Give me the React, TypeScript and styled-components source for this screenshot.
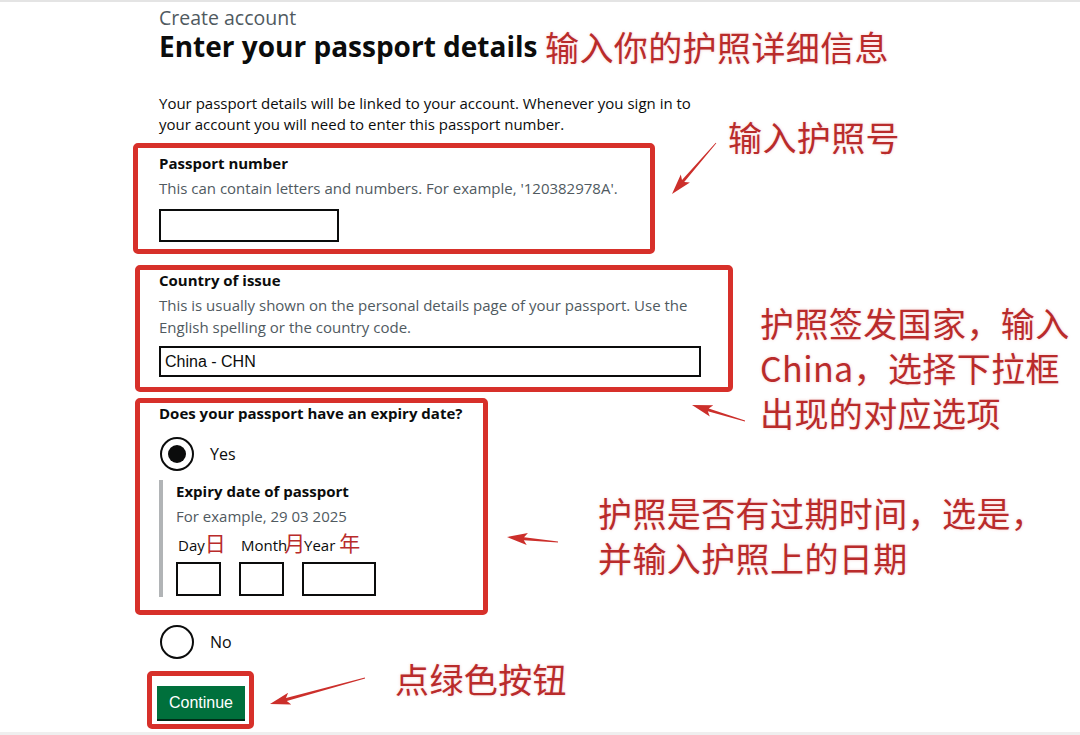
import styled, { createGlobalStyle } from "styled-components";

const GlobalStyle = createGlobalStyle`
  html, body {
    margin: 0;
    padding: 0;
    background: #ffffff;
  }
  body {
    font-family: "Open Sans", "Noto Sans", sans-serif;
    color: #0b0c0c;
    overflow: hidden;
  }
`;

const Page = styled.div`
  position: relative;
  width: 1080px;
  height: 735px;
  box-sizing: border-box;
  border-top: 2px solid #e4e4e4;
  border-bottom: 3px solid #efefef;
  overflow: hidden;
`;

const Column = styled.main`
  display: flex;
  flex-direction: column;
  align-items: flex-start;
  padding: 6px 0 0 159px;
`;

const Caption = styled.span`
  font-size: 19.5px;
  line-height: 20px;
  color: #505a5f;
`;

const Heading = styled.h1`
  margin: 3px 0 0;
  font-size: 28px;
  line-height: 30px;
  font-weight: 700;
`;

const Lead = styled.p`
  margin: 32px 0 0;
  font-size: 15px;
  line-height: 21px;
  white-space: nowrap;
`;

const Section = styled.section<{
  $inset: number;
  $width: number;
  $top: number;
  $pt?: number;
  $pb: number;
  $pl: number;
}>`
  box-sizing: border-box;
  display: flex;
  flex-direction: column;
  align-items: flex-start;
  width: ${(p) => p.$width}px;
  margin: ${(p) => p.$top}px 0 0 -${(p) => p.$inset}px;
  padding: ${(p) => p.$pt ?? 0}px 0 ${(p) => p.$pb}px ${(p) => p.$pl}px;
  border: 5px solid #d7302a;
  border-radius: 5px;
`;

const Label = styled.label<{ $gap?: number }>`
  display: block;
  margin-top: ${(p) => p.$gap ?? 0}px;
  font-size: 15px;
  line-height: 20px;
  font-weight: 700;
`;

const Hint = styled.div<{ $gap: number; $lh?: number }>`
  margin-top: ${(p) => p.$gap}px;
  font-size: 15px;
  line-height: ${(p) => p.$lh ?? 20}px;
  color: #505a5f;
  white-space: nowrap;
`;

const TextInput = styled.input<{ $w: number; $h: number; $gap: number }>`
  box-sizing: border-box;
  width: ${(p) => p.$w}px;
  height: ${(p) => p.$h}px;
  margin-top: ${(p) => p.$gap}px;
  padding: 0 4px;
  border: 2px solid #0b0c0c;
  border-radius: 0;
  font-family: "Liberation Sans", Arial, sans-serif;
  font-size: 16px;
  color: #0b0c0c;
  background: #fff;
  outline: none;
`;

const RadioRow = styled.div<{ $gap: number }>`
  display: flex;
  align-items: center;
  gap: 16px;
  margin-top: ${(p) => p.$gap}px;
  margin-left: 1px;
  font-size: 16px;
  line-height: 22px;
`;

const RadioCircle = styled.span<{ $checked?: boolean }>`
  box-sizing: border-box;
  display: flex;
  align-items: center;
  justify-content: center;
  width: 34px;
  height: 34px;
  border: 2px solid #0b0c0c;
  border-radius: 50%;

  &::after {
    content: "";
    display: ${(p) => (p.$checked ? "block" : "none")};
    width: 18px;
    height: 18px;
    border-radius: 50%;
    background: #0b0c0c;
  }
`;

const Conditional = styled.div`
  display: flex;
  flex-direction: column;
  margin-top: 9px;
  padding: 1px 0 1px 13px;
  border-left: 4px solid #b1b4b6;
`;

const DateRow = styled.div`
  display: flex;
  gap: 18px;
  margin-top: 7px;
`;

const DateItem = styled.div<{ $w: number }>`
  display: flex;
  flex-direction: column;
  gap: 5px;
  flex: none;
  width: ${(p) => p.$w}px;
`;

const DateLabel = styled.span`
  padding-left: 2px;
  font-size: 15px;
  line-height: 24px;
  white-space: nowrap;
`;

const Mark = styled.span<{ $pull?: number }>`
  margin-left: -${(p) => p.$pull ?? 0}px;
  font-family: "Noto Sans CJK SC", sans-serif;
  font-size: 21px;
  line-height: 0;
  color: #b92b2b;
`;

const DateInput = styled.input`
  box-sizing: border-box;
  width: 100%;
  height: 34px;
  border: 2px solid #0b0c0c;
  border-radius: 0;
  background: #fff;
  outline: none;
`;

const Button = styled.button`
  width: 88px;
  height: 33px;
  padding: 0;
  border: none;
  border-radius: 0;
  background: #00703c;
  box-shadow: 0 2px 0 #002d18;
  color: #ffffff;
  font-family: "Liberation Sans", Arial, sans-serif;
  font-size: 16px;
  cursor: pointer;
`;

const Callout = styled.div<{ $x: number; $y: number }>`
  position: absolute;
  left: ${(p) => p.$x}px;
  top: ${(p) => p.$y}px;
  font-family: "Noto Sans CJK SC", sans-serif;
  font-size: 34px;
  line-height: 45px;
  letter-spacing: 0.4px;
  color: #b92b2b;
  white-space: nowrap;
  text-shadow: 0 0 3px rgba(220, 60, 60, 0.25);
`;

const Overlay = styled.svg`
  position: absolute;
  inset: 0;
  pointer-events: none;
`;

type Pt = [number, number];

const arrowPath = (tail: Pt, tip: Pt, headLen = 17, headW = 6, shaftW = 3) => {
  const dx = tip[0] - tail[0];
  const dy = tip[1] - tail[1];
  const len = Math.hypot(dx, dy);
  const ux = dx / len;
  const uy = dy / len;
  const nx = -uy;
  const ny = ux;
  const bx = tip[0] - ux * headLen;
  const by = tip[1] - uy * headLen;
  const wx = tip[0] - ux * headLen * 1.2;
  const wy = tip[1] - uy * headLen * 1.2;
  const pts: Pt[] = [
    [tail[0] + nx * 0.4, tail[1] + ny * 0.4],
    [bx + (nx * shaftW) / 2, by + (ny * shaftW) / 2],
    [wx + nx * headW, wy + ny * headW],
    tip,
    [wx - nx * headW, wy - ny * headW],
    [bx - (nx * shaftW) / 2, by - (ny * shaftW) / 2],
    [tail[0] - nx * 0.4, tail[1] - ny * 0.4],
  ];
  return "M" + pts.map((p) => `${p[0].toFixed(1)} ${p[1].toFixed(1)}`).join(" L") + " Z";
};

const arrows: [Pt, Pt][] = [
  [[716, 141], [672, 192]],
  [[745, 419], [692, 403]],
  [[558, 540], [507, 535]],
  [[365, 676], [270, 702]],
];

export default function App() {
  return (
    <>
      <GlobalStyle />
      <Page>
        <Column>
          <Caption>Create account</Caption>
          <Heading>Enter your passport details</Heading>
          <Lead>
            Your passport details will be linked to your account. Whenever you sign in to
            <br />
            your account you will need to enter this passport number.
          </Lead>

          <Section $inset={26} $width={522} $top={8} $pt={5} $pb={7} $pl={21}>
            <Label>Passport number</Label>
            <Hint $gap={5}>
              This can contain letters and numbers. For example, '120382978A'.
            </Hint>
            <TextInput $w={180} $h={33} $gap={11} />
          </Section>

          <Section $inset={24} $width={598} $top={11} $pb={10} $pl={19}>
            <Label>Country of issue</Label>
            <Hint $gap={4} $lh={22}>
              This is usually shown on the personal details page of your passport. Use the
              <br />
              English spelling or the country code.
            </Hint>
            <TextInput $w={542} $h={31} $gap={8} defaultValue="China - CHN" />
          </Section>

          <Section $inset={24} $width={353} $top={6} $pb={13} $pl={19}>
            <Label>Does your passport have an expiry date?</Label>
            <RadioRow $gap={14}>
              <RadioCircle $checked />
              Yes
            </RadioRow>
            <Conditional>
              <Label>Expiry date of passport</Label>
              <Hint $gap={5}>For example, 29 03 2025</Hint>
              <DateRow>
                <DateItem $w={45}>
                  <DateLabel>
                    Day<Mark>日</Mark>
                  </DateLabel>
                  <DateInput />
                </DateItem>
                <DateItem $w={45}>
                  <DateLabel>
                    Month<Mark $pull={3}>月</Mark>
                  </DateLabel>
                  <DateInput />
                </DateItem>
                <DateItem $w={74}>
                  <DateLabel>
                    Year <Mark>年</Mark>
                  </DateLabel>
                  <DateInput />
                </DateItem>
              </DateRow>
            </Conditional>
          </Section>

          <RadioRow $gap={10}>
            <RadioCircle />
            No
          </RadioRow>

          <Section $inset={12} $width={107} $top={12} $pt={10} $pb={5} $pl={5}>
            <Button>Continue</Button>
          </Section>
        </Column>

        <Callout $x={545} $y={22}>输入你的护照详细信息</Callout>
        <Callout $x={728} $y={112}>输入护照号</Callout>
        <Callout $x={760} $y={298}>
          护照签发国家，输入
          <br />
          China，选择下拉框
          <br />
          出现的对应选项
        </Callout>
        <Callout $x={598} $y={488}>
          护照是否有过期时间，选是，
          <br />
          并输入护照上的日期
        </Callout>
        <Callout $x={395} $y={654}>点绿色按钮</Callout>

        <Overlay width="1080" height="735" viewBox="0 0 1080 735">
          {arrows.map(([tail, tip], i) => (
            <path key={i} d={arrowPath(tail, tip)} fill="#cc2f2b" />
          ))}
        </Overlay>
      </Page>
    </>
  );
}
